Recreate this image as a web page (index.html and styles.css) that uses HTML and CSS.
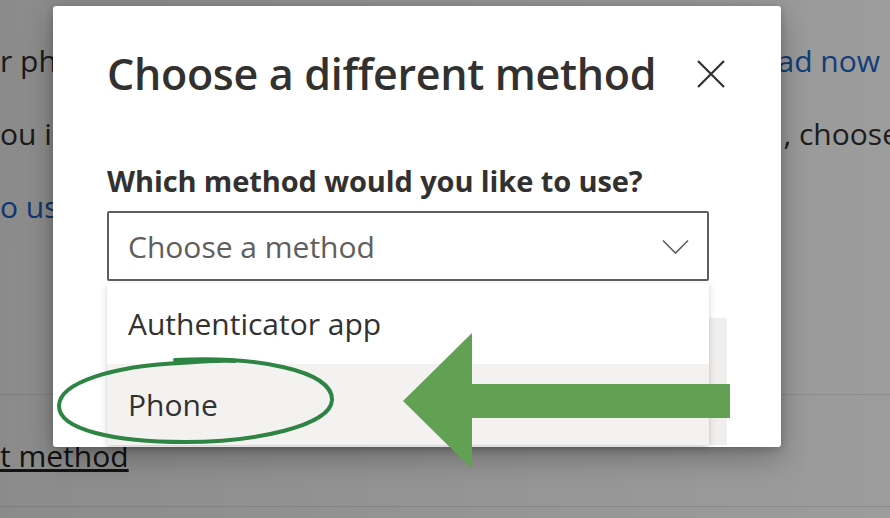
FILE: index.html
```html
<!DOCTYPE html>
<html lang="en">
<head>
<meta charset="utf-8">
<title>Choose a different method</title>
<link rel="stylesheet" href="styles.css">
</head>
<body>
<div class="page">
  <div class="page-line l1"><span class="clip">r ph</span><a class="link">ad now</a></div>
  <div class="page-line l2"><span class="clip">ou in</span><span class="right-cut">, choose</span></div>
  <div class="page-line l3"><a class="link clip">o us</a></div>
  <div class="page-sep"></div>
  <div class="page-line l4"><a class="plain-link">t method</a></div>
  <div class="page-sep bottom"></div>
</div>
<div class="overlay"></div>

<div class="dialog" role="dialog">
  <div class="dialog-head">
    <h1 class="dialog-title">Choose a different method</h1>
    <button class="close" aria-label="Close">
      <svg width="28" height="28" viewBox="0 0 28 28"><path d="M1 1 L27 27 M27 1 L1 27" stroke="#323130" stroke-width="2.2" fill="none"/></svg>
    </button>
  </div>
  <div class="field-label">Which method would you like to use?</div>
  <div class="select-wrap">
    <div class="select">
      <span class="placeholder">Choose a method</span>
      <svg class="chev" width="27" height="16" viewBox="0 0 27 16"><path d="M1 1.5 L13.5 14 L26 1.5" stroke="#605e5c" stroke-width="1.6" fill="none"/></svg>
    </div>
    <div class="listbox">
      <div class="option">Authenticator app</div>
      <div class="option selected">Phone</div>
    </div>
  </div>
  <div class="dialog-foot">
    <div class="btn-ghost"></div>
  </div>
</div>

<svg class="ellipse" width="290" height="100" viewBox="0 0 290 100">
  <path d="M120 4 C200 0 278 14 277 44 C276 70 200 86 130 86 C60 86 4 74 4 50 C4 26 60 10 125 7 C140 6 160 4 180 5" stroke="#2e8443" stroke-width="4" fill="none" stroke-linecap="round"/>
</svg>

<svg class="arrow" width="330" height="140" viewBox="0 0 330 140">
  <polygon points="0,68 69,0 69,51 327,51 327,85 69,85 69,136" fill="#62a053"/>
</svg>
</body>
</html>
```
FILE: styles.css
```css
* { box-sizing: border-box; }
html, body { margin: 0; padding: 0; }
body {
  width: 890px;
  height: 518px;
  overflow: hidden;
  position: relative;
  font-family: "Open Sans", "Noto Sans", sans-serif;
  color: #323130;
  background: #fff;
}
.page {
  display: flex;
  flex-direction: column;
  padding-top: 40px;
  font-size: 30px;
}
.page-line {
  display: flex;
  justify-content: space-between;
  height: 73px;
  white-space: nowrap;
  overflow: hidden;
}
.clip {
  display: block;
  width: 53px;
  overflow: hidden;
}
.page-line.l1 { padding-right: 10px; }
.right-cut { margin-right: -9px; }
.link { color: #1a66c9; }
.page-sep { height: 1px; background: #e8e8e8; margin-top: 135px; }
.page-line.l4 { margin-top: 40px; height: 44px; }
.plain-link { text-decoration: underline; color: #222; }
.page-sep.bottom { margin-top: 27px; background: #e6e6e6; }

.overlay {
  position: absolute;
  inset: 0;
  background: linear-gradient(90deg, rgba(0,0,0,0.455) 0%, rgba(0,0,0,0.42) 50%, rgba(0,0,0,0.39) 100%);
}

.dialog {
  position: absolute;
  left: 53px;
  top: 6px;
  width: 728px;
  height: 441px;
  background: #fff;
  border-radius: 3px;
  box-shadow: 0 10px 30px rgba(0,0,0,0.28), 0 2px 8px rgba(0,0,0,0.18);
  padding: 36px 54px 0 54px;
  display: flex;
  flex-direction: column;
  z-index: 1;
}
.dialog-head {
  display: flex;
  justify-content: space-between;
  align-items: center;
}
.dialog-title {
  margin: 0;
  font-size: 43px;
  font-weight: 600;
  line-height: 64px;
  color: #323130;
  letter-spacing: -0.3px;
}
.close {
  border: 0;
  background: none;
  padding: 0;
  margin-right: 2px;
  width: 28px;
  height: 28px;
  display: flex;
}
.field-label {
  margin-top: 55px;
  font-size: 29px;
  font-weight: 700;
  line-height: 40px;
  color: #323130;
  letter-spacing: -0.1px;
}
.select-wrap {
  position: relative;
  margin-top: 10px;
  width: 602px;
}
.select {
  height: 70px;
  border: 2px solid #605e5c;
  border-radius: 2px;
  display: flex;
  align-items: center;
  justify-content: space-between;
  padding: 0 18px 0 19px;
}
.placeholder {
  font-size: 30px;
  color: #605e5c;
}
.chev { margin-top: 2px; }
.listbox {
  position: absolute;
  left: 0;
  top: 72px;
  width: 602px;
  background: #fff;
  box-shadow: 0 3px 8px rgba(0,0,0,0.13), 0 1px 3px rgba(0,0,0,0.1);
  border-radius: 0 0 2px 2px;
  z-index: 2;
}
.option {
  height: 81px;
  display: flex;
  align-items: center;
  padding-left: 21px;
  font-size: 30px;
  color: #323130;
}
.option.selected { background: #f3f2f1; }
.dialog-foot {
  display: flex;
  justify-content: flex-end;
  margin-top: 37px;
  flex: 1;
}
.btn-ghost {
  width: 160px;
  height: 127px;
  background: #f0efee;
  border-radius: 3px 3px 0 0;
}

.ellipse {
  position: absolute;
  left: 55px;
  top: 356px;
  z-index: 5;
}
.arrow {
  position: absolute;
  left: 403px;
  top: 333px;
  z-index: 5;
}
```
